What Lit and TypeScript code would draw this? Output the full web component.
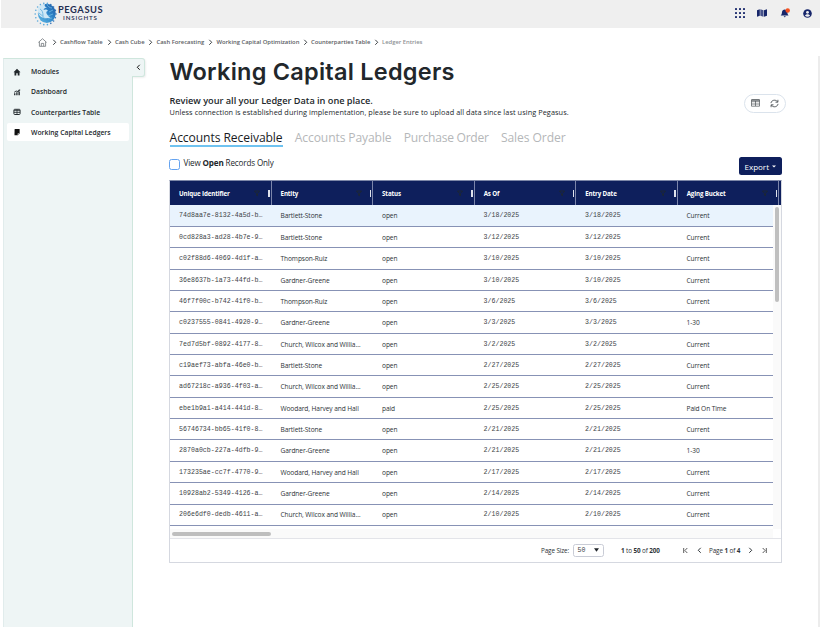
import { LitElement, html, css, svg } from "lit";
import { customElement } from "lit/decorators.js";
import { classMap } from "lit/directives/class-map.js";

const columns = ["Unique Identifier", "Entity", "Status", "As Of", "Entry Date", "Aging Bucket"];

const rows: string[][] = [
  ["74d8aa7e-8132-4a5d-b…", "Bartlett-Stone", "open", "3/18/2025", "Current"],
  ["0cd828a3-ad28-4b7e-9…", "Bartlett-Stone", "open", "3/12/2025", "Current"],
  ["c02f88d6-4069-4d1f-a…", "Thompson-Ruiz", "open", "3/10/2025", "Current"],
  ["36e8637b-1a73-44fd-b…", "Gardner-Greene", "open", "3/10/2025", "Current"],
  ["46f7f00c-b742-41f0-b…", "Thompson-Ruiz", "open", "3/6/2025", "Current"],
  ["c0237555-0841-4920-9…", "Gardner-Greene", "open", "3/3/2025", "1-30"],
  ["7ed7d5bf-0892-4177-8…", "Church, Wilcox and Willia…", "open", "3/2/2025", "Current"],
  ["c19aef73-abfa-46e0-b…", "Bartlett-Stone", "open", "2/27/2025", "Current"],
  ["ad67218c-a936-4f03-a…", "Church, Wilcox and Willia…", "open", "2/25/2025", "Current"],
  ["ebe1b9a1-a414-441d-8…", "Woodard, Harvey and Hall", "paid", "2/25/2025", "Paid On Time"],
  ["56746734-bb65-41f0-8…", "Bartlett-Stone", "open", "2/21/2025", "Current"],
  ["2870a0cb-227a-4dfb-9…", "Gardner-Greene", "open", "2/21/2025", "1-30"],
  ["173235ae-cc7f-4770-9…", "Woodard, Harvey and Hall", "open", "2/17/2025", "Current"],
  ["10928ab2-5349-4126-a…", "Gardner-Greene", "open", "2/14/2025", "Current"],
  ["206e6df0-dedb-4611-a…", "Church, Wilcox and Willia…", "open", "2/10/2025", "Current"],
];

const chevron = (left = false) => html`<svg class="chev" viewBox="0 0 6 8" width="5" height="6.6">
  <path d=${left ? "M4.5 1 1.5 4l3 3" : "M1.5 1l3 3-3 3"} fill="none" stroke="currentColor" stroke-width="1.2" />
</svg>`;

@customElement("ledger-grid")
export class LedgerGrid extends LitElement {
  static styles = css`
    :host { display: flex; flex-direction: column; box-sizing: border-box; width: 613px; height: 383px; border: 1px solid #d5d8e0; border-top-color: #7d87a8; border-radius: 1px; font: 6.6px "Open Sans", sans-serif; color: #2c3236; }
    .head { display: grid; grid-template-columns: repeat(6, 101.55px) 1fr; height: 24.5px; background: #0e1f5c; color: #fff; font-weight: 700; font-size: 6.2px; flex: none; }
    .th { display: flex; align-items: center; padding-left: 9px; border-right: 1px solid #7b85aa; box-sizing: border-box; }
    .th span { flex: 1; letter-spacing: -0.13px; }
    .grip { width: 1.5px; height: 7px; background: #dfe2ec; margin-left: 8px; margin-right: 1px; }
    .body { display: flex; flex: 1; min-height: 0; }
    .rows { width: 603px; }
    .row { display: grid; grid-template-columns: 101.5px 101.5px 101.5px 101.5px 101.5px 1fr; height: 21.36px; box-sizing: border-box; border-bottom: 1px solid #8792b5; align-items: center; padding: 0.6px 0 0 9px; white-space: nowrap; letter-spacing: -0.09px; }
    .row.active { background: #e9f3fd; }
    .mono { font-family: "Liberation Mono", monospace; font-size: 6.6px; letter-spacing: 0.02px; color: #3d4347; }
    .track { flex: 1; background: #fafafa; padding-top: 2px; }
    .vthumb { width: 4px; height: 95px; border-radius: 2px; background: #bfbfbf; margin-left: 2px; }
    .hbar { height: 8.5px; background: #fafafa; width: 603px; display: flex; align-items: center; flex: none; }
    .hthumb { width: 99px; height: 4px; border-radius: 2px; background: #bebebe; margin-left: 2px; }
    .foot { height: 23px; border-top: 1.5px solid #e3e4e9; display: flex; align-items: center; flex: none; font-size: 6.3px; letter-spacing: -0.1px; white-space: nowrap; }
    .size { margin-left: 371px; width: 31.5px; }
    .select { box-sizing: border-box; width: 31px; height: 12.5px; border: 1px solid #c9ccd6; border-radius: 2.5px; display: flex; align-items: center; justify-content: space-between; padding: 0 4px; }
    .range { margin-left: 17.5px; width: 61.5px; }
    .page { width: 31.5px; margin: 0 7px; }
    .last { margin-left: 9.5px; }
    .first { margin-right: 9.5px; }
    svg { display: block; flex: none; }
  `;
  render() {
    return html`
      <div class="head">
        ${columns.map((c) => html`<div class="th"><span>${c}</span>
          <svg width="6" height="7" viewBox="0 0 6 7"><path d="M.5 1h5L3.5 3.5v2.3l-1-.6V3.5z" fill="none" stroke="#1c2634" /></svg>
          <i class="grip"></i></div>`)}
      </div>
      <div class="body">
        <div class="rows">
          ${rows.map(([id, entity, status, date, aging], i) => html`<div class=${classMap({ row: true, active: i === 0 })}>
            <span class="mono">${id}</span><span>${entity}</span><span>${status}</span>
            <span class="mono">${date}</span><span class="mono">${date}</span><span>${aging}</span>
          </div>`)}
        </div>
        <div class="track"><div class="vthumb"></div></div>
      </div>
      <div class="hbar"><div class="hthumb"></div></div>
      <div class="foot">
        <span class="size">Page Size:</span>
        <span class="select"><span class="mono">50</span><svg width="5" height="4"><path d="M0 .3h5L2.5 3.7z" fill="#20252a" /></svg></span>
        <span class="range"><b>1</b> to <b>50</b> of <b>200</b></span>
        <svg class="first" width="5" height="7" viewBox="0 0 5 7"><path d="M.7 1v5M4.3 1 1.9 3.5l2.4 2.5" fill="none" stroke="#333" stroke-width=".8" /></svg>
        ${chevron(true)}
        <span class="page">Page <b>1</b> of <b>4</b></span>
        ${chevron()}
        <svg class="last" width="5" height="7" viewBox="0 0 5 7"><path d="M4.3 1v5M.7 1l2.4 2.5L.7 6" fill="none" stroke="#333" stroke-width=".8" /></svg>
      </div>`;
  }
}

const crumbs: [string, number][] = [
  ["Cashflow Table", 55],
  ["Cash Cube", 41.5],
  ["Cash Forecasting", 60],
  ["Working Capital Optimization", 94.5],
  ["Counterparties Table", 71],
  ["Ledger Entries", 60],
];

const navIcons = [
  svg`<path d="M.5 4.2 4 .8l3.5 3.4h-1V7.4H4.7V5.2H3.3v2.2H1.5V4.2z" fill="#20272b" />`,
  svg`<path d="M1 7.2V5.2h1.4v2zM3.2 7.2V4.3h1.4v2.9zM5.4 7.2V3.4h1.5v3.8zM1 4 3.2 2.4l1.4.6L6 1.4h1.2v1.2L4.8 4 3.4 3.4 1 4.7z" fill="#30373b" />`,
  svg`<rect x=".9" y="1.3" width="6.2" height="5.2" rx=".8" fill="none" stroke="#252c30" /><path d="M1 2.6h6M1 4.4h6M4 1.5v5" stroke="#252c30" stroke-width=".8" />`,
  svg`<path d="M2 .9h4.6v4.4L4.8 7.2H1.5l.1-6z" fill="#111" /><path d="M4.9 7.1V5.5h1.6" fill="none" stroke="#fff" stroke-width=".5" />`,
];
const navLabels = ["Modules", "Dashboard", "Counterparties Table", "Working Capital Ledgers"];

const rays = Array.from({ length: 18 }, (_, i) => (i * 20 * Math.PI) / 180);

@customElement("app-root")
export class AppRoot extends LitElement {
  static styles = css`
    :host { display: block; width: 820px; height: 627px; overflow: hidden; background: #fff; font-family: "Open Sans", sans-serif; color: #22272b; }
    svg { display: block; flex: none; }
    .bar { height: 28px; margin-left: 1px; background: #efefef; display: flex; align-items: center; justify-content: space-between; box-sizing: border-box; padding: 0 8px 2px 33px; }
    .logo { display: flex; align-items: center; }
    .brand { margin-left: 1px; color: #1f2d50; font-family: Lato, sans-serif; }
    .brand b { display: block; font-size: 9.3px; line-height: 9px; letter-spacing: 0.58px; font-weight: 700; }
    .brand span { display: block; font-size: 6.2px; line-height: 7px; letter-spacing: 0.85px; margin-left: 5px; font-weight: 600; }
    .tools { display: flex; gap: 12.3px; align-items: center; }
    .crumbs { height: 28px; display: flex; align-items: center; padding-left: 37.5px; font-size: 5.9px; font-weight: 600; color: #5b6064; white-space: nowrap; letter-spacing: -0.03px; }
    .crumbs .sep { margin-left: 5px; margin-right: 3.5px; color: #3c4145; }
    .crumb { display: flex; align-items: center; }
    .crumb:last-child { color: #8d9195; }
    .main { display: flex; height: 571px; }
    .side { margin: 1.5px 0 0 3px; width: 130px; box-sizing: border-box; border: 1px solid; border-width: 1px 1px 0 1px; background: #eef5f5; flex: none; position: relative; padding: 4px 3px 0; border-color: #cfe6dd #cfe6dd #fff #e1ecec; }
    .toggle { position: absolute; left: 128px; top: -1px; width: 12px; height: 17px; border: 1px solid #cfe6dd; border-left: 0; border-radius: 0 3px 3px 0; background: #eef5f5; display: flex; align-items: center; justify-content: flex-end; box-shadow: 1px 1px 2px #0001; color: #111; }
    .toggle .chev { margin-right: 3.4px; }
    .nav { height: 18px; margin-bottom: 2.3px; display: flex; align-items: center; gap: 10.5px; padding-left: 5.5px; font-size: 6.8px; font-weight: 600; border-radius: 2px; white-space: nowrap; }
    .nav.on { background: #fff; }
    .content { padding-left: 36px; width: 650px; box-sizing: border-box; flex: none; }
    h1 { margin: 2px 0 0 0.5px; font: 600 23.5px/28px Inter, sans-serif; letter-spacing: 0.24px; white-space: nowrap; }
    .intro { display: flex; justify-content: space-between; height: 35px; width: 617px; margin-top: 5px; }
    .lead { font-size: 9.2px; font-weight: 600; line-height: 12px; margin: 4px 0 0 0.5px; letter-spacing: -0.02px; }
    .sub { font-size: 7.3px; line-height: 10px; letter-spacing: 0.08px; margin-left: 0.5px; }
    .pill { box-sizing: border-box; width: 42px; height: 18.5px; border: 1px solid #dbe3ec; border-radius: 10px; display: flex; align-items: center; justify-content: space-between; padding: 0 6px; margin-top: 3px; }
    .tabs { display: flex; gap: 12.3px; font-size: 12.1px; line-height: 17px; color: #b5b7b9; height: 19px; margin: 2.8px 0 0 0.6px; white-space: nowrap; letter-spacing: -0.08px; }
    .tab:nth-child(2) { letter-spacing: -0.12px; }
    .tab:nth-child(3) { letter-spacing: -0.28px; }
    .tab.on { color: #181b1e; border-bottom: 2px solid #6fc3f0; height: 16.2px; }
    .controls { display: flex; justify-content: space-between; width: 612.5px; height: 32.2px; }
    .check { display: flex; font-size: 8.1px; line-height: 12px; margin-top: 9px; gap: 3.5px; letter-spacing: -0.15px; }
    .box { width: 9px; height: 9px; border: 1px solid #64a3f0; border-radius: 2.5px; margin-top: 2px; }
    .export { box-sizing: border-box; width: 42.5px; height: 18px; border-radius: 2.5px; background: #0e1f5c; color: #fff; font-size: 8px; display: flex; align-items: center; justify-content: center; gap: 3px; margin-top: 9.5px; }
    .edge { margin-left: auto; width: 2px; background: #ececec; }
  `;
  render() {
    return html`
      <div class="bar">
        <div class="logo">
          <svg width="23" height="25" viewBox="0 0 23 25">
            <defs><linearGradient id="g" x1="0" x2="1" y1="1" y2="0"><stop offset="0" stop-color="#62b9e5" /><stop offset=".55" stop-color="#2f86c9" /><stop offset="1" stop-color="#1d58a5" /></linearGradient></defs>
            ${rays.map((a) => svg`<circle cx=${11.6 + 10.4 * Math.cos(a)} cy=${13 + 10.8 * Math.sin(a)} r=".8" fill=${Math.cos(a) > 0.3 ? "#2b6fb5" : "#57a9dc"} />`)}
            <ellipse cx="12.8" cy="12.4" rx="8.9" ry="9.6" fill="url(#g)" />
            <path d="M3.6 9C5 5 8 3.2 11 3c-1 2 0 3 2 3.5-2 .2-3 1-3.5 2.5 2-1 4-.5 4.5 1-1.5.2-2 1-1.5 2.5 1 1.8 2 3 4 4-5 2-12.5.5-12.9-7.5z" fill="#cfe8f6" />
            <path d="M6 8c2 1 3 3 3 7M4.5 12c2 1 4 3 6 5M13 3c0 2 3 4 5 4M15 11l4-2M14 15l5-2M14 18l4-1" fill="none" stroke="#68b3e0" stroke-width=".9" />
          </svg>
          <div class="brand"><b>PEGASUS</b><span>INSIGHTS</span></div>
        </div>
        <div class="tools">
          <svg width="10" height="10" viewBox="0 0 10 10">${[0, 4, 8].flatMap((x) => [0, 4, 8].map((y) => svg`<rect x=${x} y=${y} width="2" height="2" rx=".4" fill="#17266a" />`))}</svg>
          <svg width="10" height="8" viewBox="0 0 10 8"><path d="M0 1.2 2.8.3v6.4L0 7.7zM7 1.3 10 .2v6.5l-3 1z" fill="#17266a" /><path d="M3.3.3l3.2 1v6.4l-3.2-1z" fill="#46528a" /></svg>
          <svg width="11" height="10" viewBox="0 0 11 10"><path d="M.7 7.6c1-1 1.2-2 1.3-3.5C2.2 2.3 3.3 1.6 4.7 1.5c1.6 0 2.6 1.1 2.7 2.8 0 1.4.3 2.4 1.2 3.3zM3.7 8.2h2c-.2 1.3-1.8 1.3-2 0z" fill="#17266a" /><circle cx="7.7" cy="2.5" r="2.2" fill="#f4501e" /></svg>
          <svg width="9" height="9" viewBox="0 0 9 9"><circle cx="4.5" cy="4.5" r="4.3" fill="#17266a" /><circle cx="4.5" cy="3.3" r="1.4" fill="#efefef" /><path d="M2 6.7c.6-2 4.4-2 5 0-1.3 1.3-3.7 1.3-5 0z" fill="#efefef" /></svg>
        </div>
      </div>
      <div class="crumbs">
        <svg width="9" height="9" viewBox="0 0 9 9"><path d="M.4 4.4 4.5.7l4.1 3.7M1.4 3.8v4.5h6.2V3.8M3.3 8.2V5.4h2.4v2.8" fill="none" stroke="#70757a" stroke-width=".8" /></svg>
        ${crumbs.map(([label, w]) => html`<span class="crumb" style="width:${w}px"><span class="sep">${chevron()}</span>${label}</span>`)}
      </div>
      <div class="main">
        <div class="side">
          ${navLabels.map((label, i) => html`<div class=${classMap({ nav: true, on: i === 3 })}><svg width="8" height="8" viewBox="0 0 8 8">${navIcons[i]}</svg>${label}</div>`)}
          <div class="toggle">${chevron(true)}</div>
        </div>
        <div class="content">
          <h1>Working Capital Ledgers</h1>
          <div class="intro">
            <div>
              <div class="lead">Review your all your Ledger Data in one place.</div>
              <div class="sub">Unless connection is established during implementation, please be sure to upload all data since last using Pegasus.</div>
            </div>
            <div class="pill">
              <svg width="9" height="8" viewBox="0 0 9 8"><path d="M.5.8h8v6.4h-8zM.5 2.7h8M.5 5h8M4.5 2v5" fill="none" stroke="#4c5156" stroke-width=".7" /><path d="M.5 1h8" stroke="#4c5156" stroke-width="1.1" /></svg>
              <svg width="9" height="9" viewBox="0 0 9 9"><path d="M1 4.1C1.3 1 5.8.1 7.6 2.8M8 4.9C7.7 8 3.2 8.9 1.4 6.2M7.9.8v2.4H5.5M1.1 8.2V5.8h2.4" fill="none" stroke="#4c5156" stroke-width=".9" /></svg>
            </div>
          </div>
          <div class="tabs">
            <span class="tab on">Accounts Receivable</span><span class="tab">Accounts Payable</span><span class="tab">Purchase Order</span><span class="tab">Sales Order</span>
          </div>
          <div class="controls">
            <div class="check"><i class="box"></i><span>View <b>Open</b> Records Only</span></div>
            <div class="export">Export<svg width="4" height="3"><path d="M0 .5h4L2 2.5z" fill="#fff" /></svg></div>
          </div>
          <ledger-grid></ledger-grid>
        </div>
        <div class="edge"></div>
      </div>`;
  }
}
